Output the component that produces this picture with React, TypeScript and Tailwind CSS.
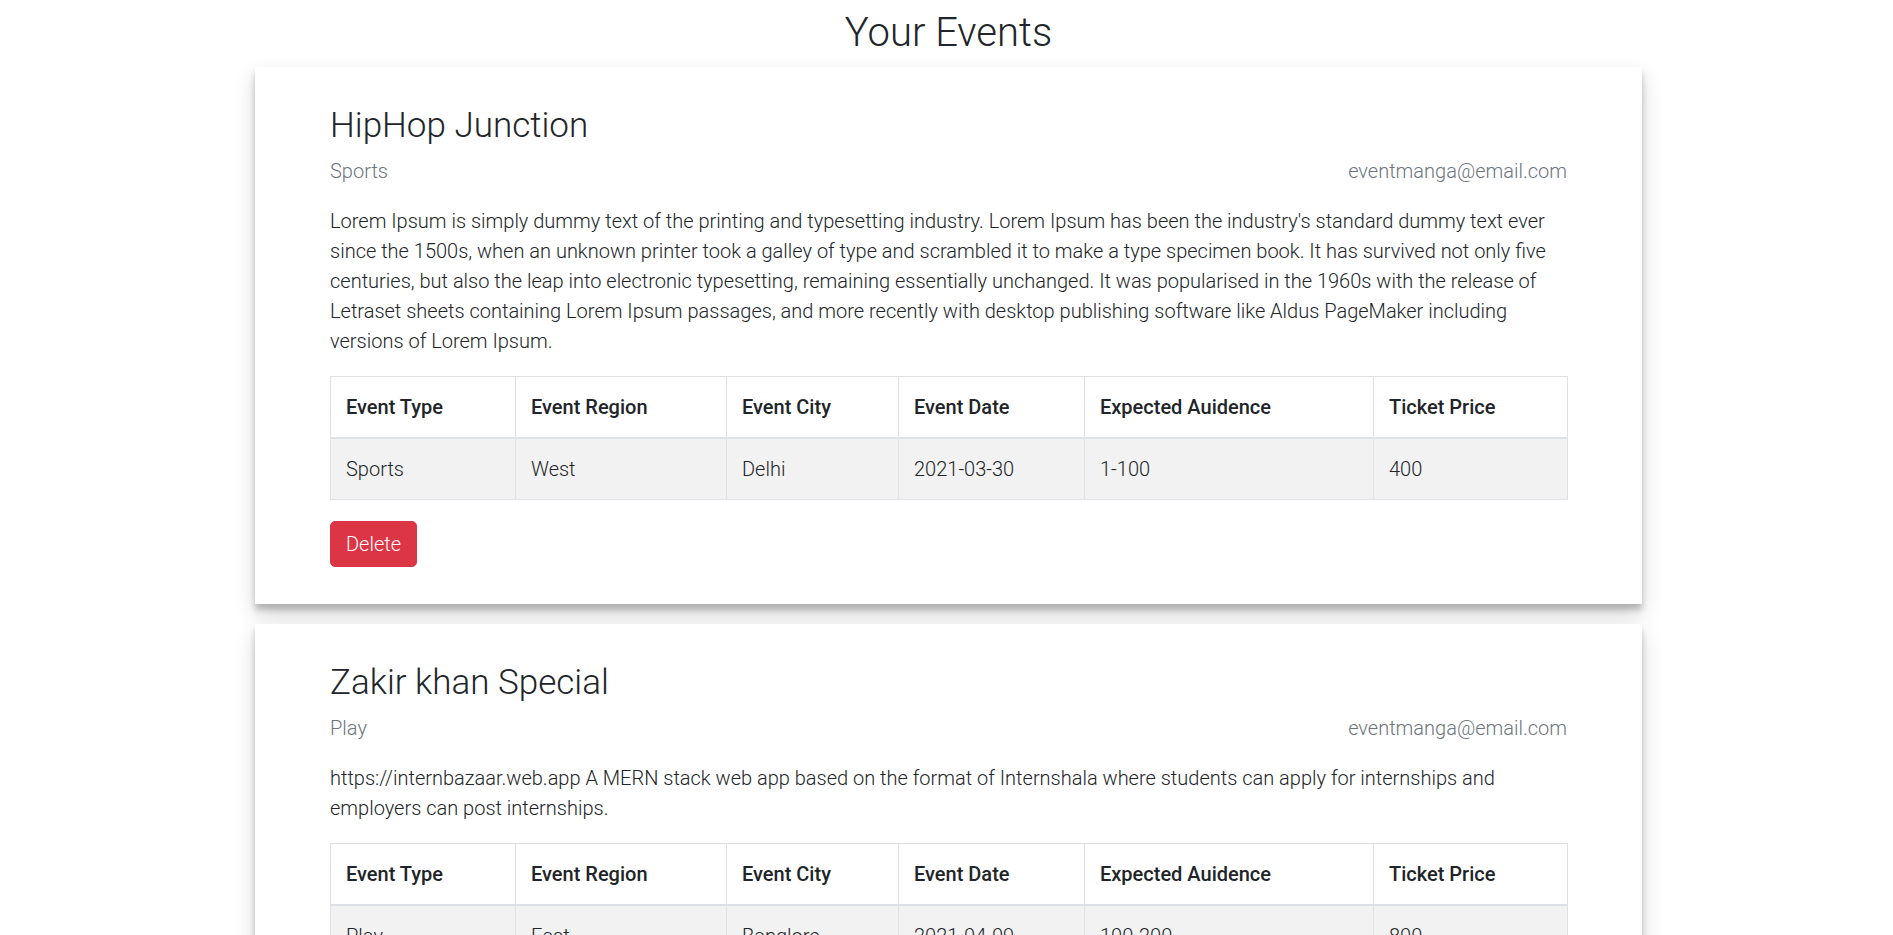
type EventItem = {
  title: string
  category: string
  email: string
  description: string
  type: string
  region: string
  city: string
  date: string
  audience: string
  price: string
}

const events: EventItem[] = [
  {
    title: 'HipHop Junction',
    category: 'Sports',
    email: 'eventmanga@email.com',
    description:
      "Lorem Ipsum is simply dummy text of the printing and typesetting industry. Lorem Ipsum has been the industry's standard dummy text ever since the 1500s, when an unknown printer took a galley of type and scrambled it to make a type specimen book. It has survived not only five centuries, but also the leap into electronic typesetting, remaining essentially unchanged. It was popularised in the 1960s with the release of Letraset sheets containing Lorem Ipsum passages, and more recently with desktop publishing software like Aldus PageMaker including versions of Lorem Ipsum.",
    type: 'Sports',
    region: 'West',
    city: 'Delhi',
    date: '2021-03-30',
    audience: '1-100',
    price: '400',
  },
  {
    title: 'Zakir khan Special',
    category: 'Play',
    email: 'eventmanga@email.com',
    description:
      'https://internbazaar.web.app A MERN stack web app based on the format of Internshala where students can apply for internships and employers can post internships.',
    type: 'Play',
    region: 'East',
    city: 'Banglore',
    date: '2021-04-09',
    audience: '100-200',
    price: '800',
  },
]

const headers = [
  { label: 'Event Type', width: 'w-[185px]' },
  { label: 'Event Region', width: 'w-[211px]' },
  { label: 'Event City', width: 'w-[172px]' },
  { label: 'Event Date', width: 'w-[186px]' },
  { label: 'Expected Auidence', width: 'w-[289px]' },
  { label: 'Ticket Price', width: 'w-[194px]' },
]

function EventCard({ event }: { event: EventItem }) {
  const cells = [event.type, event.region, event.city, event.date, event.audience, event.price]

  return (
    <div className="bg-white px-[75px] pt-[38px] pb-[37px] shadow-[0_10px_20px_rgba(0,0,0,0.17),0_6px_6px_rgba(0,0,0,0.2)]">
      <h2 className="mb-[9px] text-[35px] leading-[42px] font-light text-[#212529]">{event.title}</h2>
      <div className="mb-5 flex items-center justify-between text-[20px] leading-[30px] font-light text-[#6c757d]">
        <span>{event.category}</span>
        <span>{event.email}</span>
      </div>
      <p className="mb-5 text-[20px] leading-[30px] font-light text-[#212529]">{event.description}</p>
      <table className="mb-[21px] w-full table-fixed border-collapse text-left text-[20px] leading-[30px] text-[#212529]">
        <thead>
          <tr>
            {headers.map((h) => (
              <th
                key={h.label}
                className={`${h.width} border border-b-2 border-[#dee2e6] p-[15px] font-medium`}
              >
                {h.label}
              </th>
            ))}
          </tr>
        </thead>
        <tbody>
          <tr className="bg-[#f2f2f2]">
            {cells.map((c, i) => (
              <td key={i} className="border border-[#dee2e6] p-[15px] font-light">
                {c}
              </td>
            ))}
          </tr>
        </tbody>
      </table>
      <button
        type="button"
        className="rounded-[5px] border border-[#dc3545] bg-[#dc3545] px-[15px] py-[7px] text-[20px] leading-[30px] font-light text-white hover:bg-[#c82333]"
      >
        Delete
      </button>
    </div>
  )
}

export default function App() {
  return (
    <div className="min-h-screen bg-white pt-[9px] pl-1 font-['Roboto',sans-serif]">
      <h1 className="mb-[10px] text-center text-[40px] leading-[48px] font-light text-[#212529]">
        Your Events
      </h1>
      <div className="mx-auto flex w-[1387px] flex-col gap-5 pb-10">
        {events.map((e) => (
          <EventCard key={e.title} event={e} />
        ))}
      </div>
    </div>
  )
}
